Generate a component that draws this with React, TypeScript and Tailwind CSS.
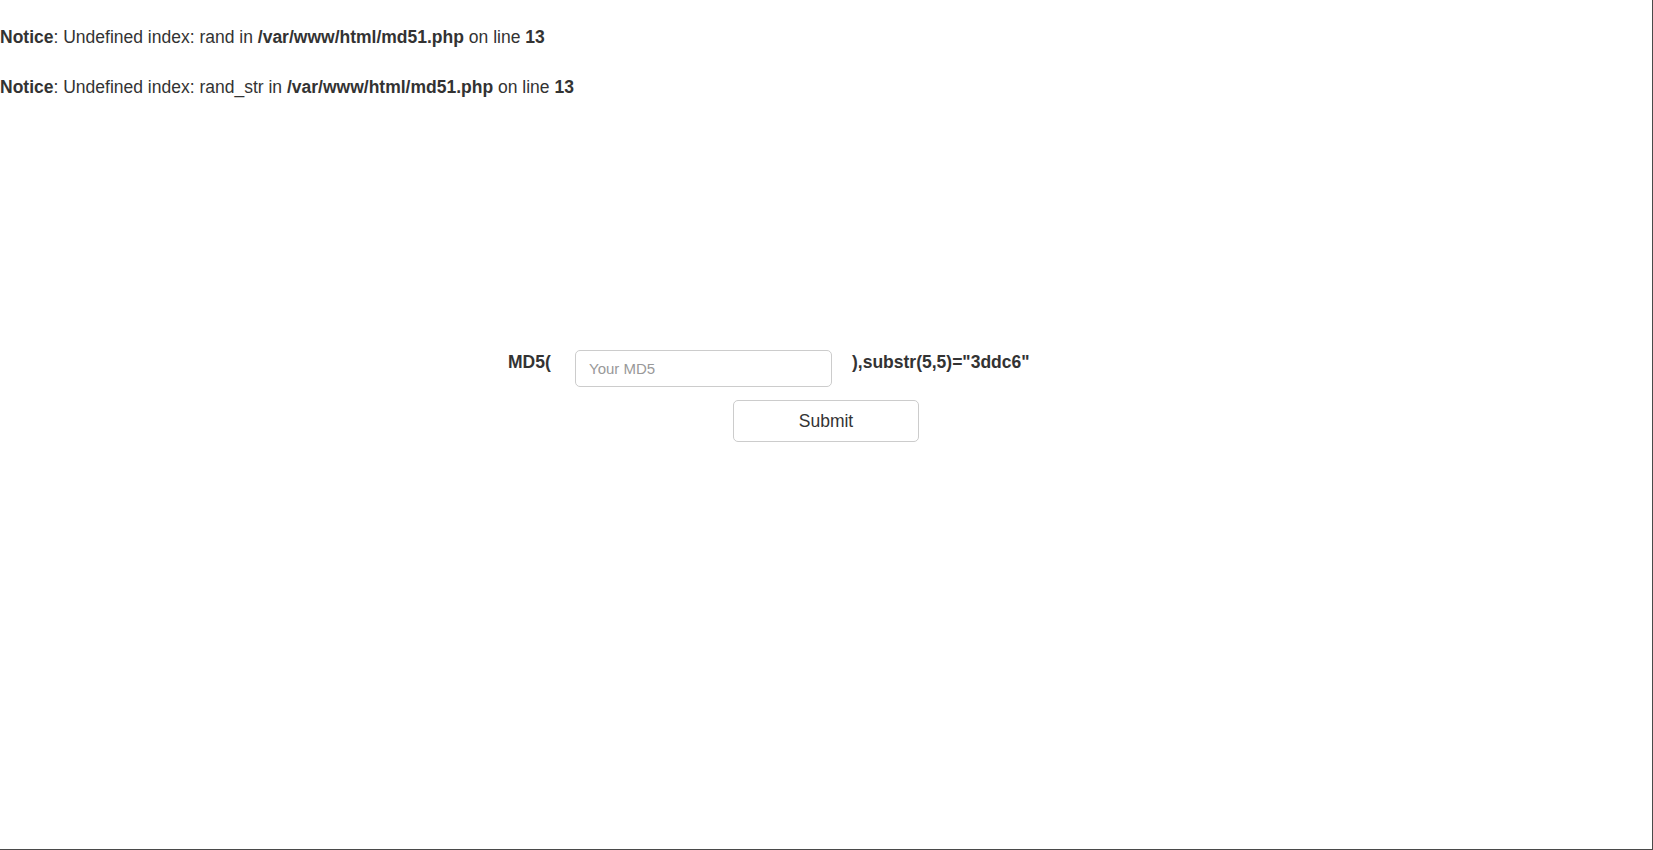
export default function App() {
  return (
    <div className="h-[850px] w-full border-r border-b border-[#4a4a4a] bg-white font-['Liberation_Sans',Arial,sans-serif] text-[17.5px] leading-[25px] text-[#333]">
      {/* PHP notices, each one wrapped by <br /> like the raw output */}
      <div>
        <br />
        <b>Notice</b>: Undefined index: rand in <b>/var/www/html/md51.php</b> on line <b>13</b>
        <br />
        <br />
        <b>Notice</b>: Undefined index: rand_str in <b>/var/www/html/md51.php</b> on line <b>13</b>
        <br />
      </div>

      <form className="mt-[250px] flex flex-col" onSubmit={(e) => e.preventDefault()}>
        <div className="flex items-start">
          <label className="ml-[508px] w-[67px] font-bold">MD5(</label>
          <input
            type="text"
            placeholder="Your MD5"
            className="h-[37px] w-[257px] rounded-[5px] border border-[#ccc] px-[13px] text-[15px] text-[#555] placeholder:text-[#999] focus:outline-none"
          />
          <span className="ml-[20px] font-bold">),substr(5,5)=&quot;3ddc6&quot;</span>
        </div>
        <button
          type="submit"
          className="mx-auto mt-[13px] h-[42px] w-[186px] rounded-[5px] border border-[#ccc] bg-white text-[17.5px] text-[#333]"
        >
          Submit
        </button>
      </form>
    </div>
  );
}
